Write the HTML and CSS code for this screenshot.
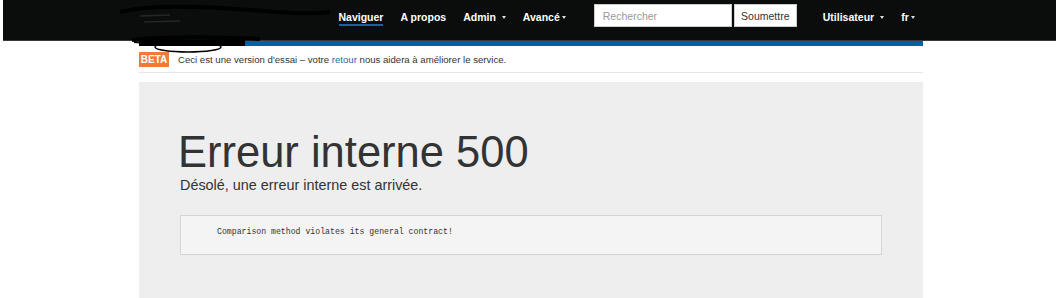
FILE: index.html
```html
<!DOCTYPE html>
<html lang="fr">
<head>
  <meta charset="UTF-8">
  <title>Erreur interne 500</title>
  <link rel="stylesheet" href="styles.css">
</head>
<body>
<div class="page">
  <header class="navbar">
    <div class="container nav-inner">
      <a class="brand" href="#"></a>
      <ul class="nav">
        <li><a class="active" href="#">Naviguer</a></li>
        <li><a href="#">A propos</a></li>
        <li><a href="#">Admin<span class="caret wide"></span></a></li>
        <li><a href="#">Avancé<span class="caret"></span></a></li>
      </ul>
      <form class="search">
        <input type="text" placeholder="Rechercher">
        <button type="button">Soumettre</button>
      </form>
      <ul class="nav nav-right">
        <li><a href="#">Utilisateur<span class="caret wide"></span></a></li>
        <li><a href="#">fr<span class="caret"></span></a></li>
      </ul>
    </div>
    <svg class="scribble" width="230" height="56" viewBox="0 0 230 56">
      <path d="M10 12 C40 4 90 6 140 10 S200 14 220 12" stroke="#000" stroke-width="4" fill="none"/>
      <path d="M30 16 L60 15 M34 22 L70 21" stroke="#262626" stroke-width="1.5" fill="none"/>
      <path d="M22 40 C60 36 110 37 150 39" stroke="#000" stroke-width="4" fill="none"/>
      <rect x="29" y="40" width="106" height="6" fill="#000"/>
      <ellipse cx="78" cy="47" rx="33" ry="5" stroke="#000" stroke-width="1.5" fill="none"/>
      <path d="M24 42 C40 44 70 41 100 43" stroke="#000" stroke-width="2" fill="none"/>
    </svg>
  </header>
  <div class="container">
    <div class="stripe"></div>
    <div class="beta">
      <span class="label">BETA</span>
      <span>Ceci est une version d'essai – votre <a href="#">retour</a> nous aidera à améliorer le service.</span>
    </div>
    <div class="jumbotron">
      <h1>Erreur interne 500</h1>
      <p>Désolé, une erreur interne est arrivée.</p>
      <pre>Comparison method violates its general contract!</pre>
    </div>
  </div>
</div>
</body>
</html>
```

FILE: styles.css
```css
body {
  margin: 0;
  font-family: "Liberation Sans", Arial, sans-serif;
  color: #333;
  background: #fff;
  overflow: hidden;
}
.page {
  padding-left: 3px;
}
.container {
  width: 784px;
  margin: 0 auto;
}
.navbar {
  position: relative;
  height: 40px;
  margin-right: 3px;
  background: #0b0c0c;
  border-bottom: 1px solid #3a3a3a;
}
.nav-inner {
  display: flex;
  align-items: flex-start;
}
.brand {
  display: block;
  width: 201px;
}
.nav {
  display: flex;
  gap: 17px;
  list-style: none;
  margin: 0;
  padding: 0;
}
.nav a {
  display: block;
  padding-top: 10.5px;
  line-height: 13px;
  font-size: 10.5px;
  font-weight: bold;
  color: #fff;
  text-decoration: none;
  border-bottom: 2px solid transparent;
}
.nav a.active {
  border-bottom-color: #1d5f9f;
}
.caret {
  display: inline-block;
  vertical-align: middle;
  margin-left: 2px;
  border-top: 3px solid #ddd;
  border-left: 2.5px solid transparent;
  border-right: 2.5px solid transparent;
}
.caret.wide {
  margin-left: 6px;
}
.search {
  display: flex;
  gap: 2px;
  margin: 4px 0 0 28px;
}
.search input {
  box-sizing: border-box;
  width: 138px;
  height: 23px;
  padding: 0 8px;
  border: 1px solid #ccc;
  font: 10.5px "Liberation Sans", Arial, sans-serif;
}
.search input::placeholder {
  color: #999;
}
.search button {
  box-sizing: border-box;
  width: 63px;
  height: 23px;
  padding: 0;
  background: #fff;
  border: 1px solid #ccc;
  color: #333;
  font: 10.5px "Liberation Sans", Arial, sans-serif;
}
.nav-right {
  margin-left: 26px;
}
.scribble {
  position: absolute;
  left: 107px;
  top: 0;
}
.stripe {
  height: 5px;
  background: #0060a8;
}
.beta {
  display: flex;
  align-items: center;
  gap: 9px;
  padding: 6px 0 5px;
  border-bottom: 1px solid #e6e6e6;
  font-size: 9.6px;
  line-height: 15px;
}
.label {
  display: block;
  width: 30px;
  height: 15px;
  background: #f07a3a;
  color: #fff;
  font-weight: bold;
  font-size: 10px;
  text-align: center;
}
.beta a {
  color: #2a6ab0;
  text-decoration: none;
}
.jumbotron {
  margin-top: 9px;
  padding: 47.5px 41px 60px;
  background: #eee;
}
.jumbotron h1 {
  margin: 0 0 0 -2px;
  font-size: 43.5px;
  line-height: 45px;
  font-weight: normal;
}
.jumbotron p {
  margin: 0;
  font-size: 14.4px;
  line-height: 20px;
}
.jumbotron pre {
  box-sizing: border-box;
  height: 40px;
  margin: 20px 0 0;
  padding: 10px 0 0 36px;
  background: #f4f4f4;
  border: 1px solid #d4d4d4;
  font: 8.2px/12px "Liberation Mono", "DejaVu Sans Mono", monospace;
  color: #333;
}
```
